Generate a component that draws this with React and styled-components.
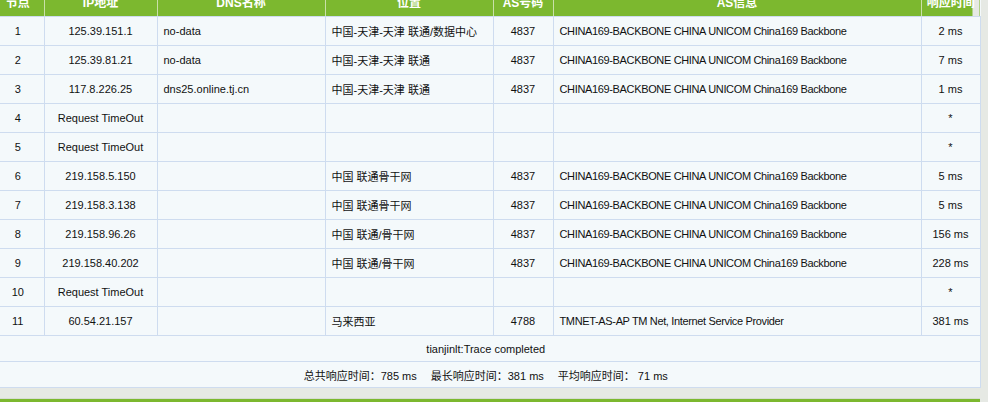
import React from 'react';
import styled, { createGlobalStyle } from 'styled-components';

const GlobalStyle = createGlobalStyle`
  html, body {
    margin: 0;
    padding: 0;
    background: #e6e9e4;
    overflow: hidden;
  }
  body {
    font-family: "Liberation Sans", "Noto Sans CJK SC", sans-serif;
    font-size: 11px;
    color: #111;
  }
`;

const green = '#7cb82f';
const line = '#cedcef';

const Page = styled.div`
  width: 988px;
  margin-left: -8px;
  margin-top: -14px;
  display: flex;
  flex-direction: column;
  & > * { flex-shrink: 0; }
`;

const Table = styled.table`
  width: 988px;
  table-layout: fixed;
  border-collapse: collapse;
  background: #f4f9fb;
`;

const Th = styled.th`
  height: 30px;
  padding: 0;
  background: ${green};
  color: #fff;
  font-weight: bold;
  font-size: 12px;
  text-align: center;
  border-left: 1px solid #c9e0a8;
  border-bottom: 1px solid ${line};
  &:first-child { border-left: none; }
  &:last-child {
    background: linear-gradient(to right, ${green} calc(100% - 7px), #e6e9e4 calc(100% - 7px));
  }
`;

const Td = styled.td`
  height: 28px;
  padding: 0 ${p => (p.$left ? '6px' : '0')};
  text-align: ${p => (p.$left ? 'left' : 'center')};
  letter-spacing: ${p => (p.$tight ? '-0.35px' : 'normal')};
  border: 1px solid ${line};
  white-space: nowrap;
  overflow: hidden;
  &:first-child { border-left: none; }
`;

const FootTd = styled.td`
  height: 25px;
  padding: 0;
  text-align: center;
  border: 1px solid ${line};
  border-left: none;
`;

const Stat = styled.span`
  margin: 0 7px;
`;

const Gap = styled.div`
  height: 10px;
`;

const Bar = styled.div`
  height: 4px;
  width: 988px;
  background: ${green};
  border-top: 1px solid #d7dcd3;
`;

const widths = [52, 113, 168, 168, 60, 368, 59];
const heads = ['节点', 'IP地址', 'DNS名称', '位置', 'AS号码', 'AS信息', '响应时间'];
const cn = 'CHINA169-BACKBONE CHINA UNICOM China169 Backbone';

const rows = [
  ['1', '125.39.151.1', 'no-data', '中国-天津-天津 联通/数据中心', '4837', cn, '2 ms'],
  ['2', '125.39.81.21', 'no-data', '中国-天津-天津 联通', '4837', cn, '7 ms'],
  ['3', '117.8.226.25', 'dns25.online.tj.cn', '中国-天津-天津 联通', '4837', cn, '1 ms'],
  ['4', 'Request TimeOut', '', '', '', '', '*'],
  ['5', 'Request TimeOut', '', '', '', '', '*'],
  ['6', '219.158.5.150', '', '中国 联通骨干网', '4837', cn, '5 ms'],
  ['7', '219.158.3.138', '', '中国 联通骨干网', '4837', cn, '5 ms'],
  ['8', '219.158.96.26', '', '中国 联通/骨干网', '4837', cn, '156 ms'],
  ['9', '219.158.40.202', '', '中国 联通/骨干网', '4837', cn, '228 ms'],
  ['10', 'Request TimeOut', '', '', '', '', '*'],
  ['11', '60.54.21.157', '', '马来西亚', '4788', 'TMNET-AS-AP TM Net, Internet Service Provider', '381 ms'],
];

const leftCols = [2, 3, 5];

function App() {
  return (
    <Page>
      <GlobalStyle />
      <Table>
        <colgroup>
          {widths.map((w, i) => <col key={i} style={{ width: w }} />)}
        </colgroup>
        <thead>
          <tr>{heads.map(h => <Th key={h}>{h}</Th>)}</tr>
        </thead>
        <tbody>
          {rows.map(r => (
            <tr key={r[0]}>
              {r.map((c, i) => (
                <Td key={i} $left={leftCols.includes(i)} $tight={i === 5}>{c}</Td>
              ))}
            </tr>
          ))}
          <tr>
            <FootTd colSpan={7}>tianjinlt:Trace completed</FootTd>
          </tr>
          <tr>
            <FootTd colSpan={7}>
              <Stat>总共响应时间：785 ms</Stat>
              <Stat>最长响应时间：381 ms</Stat>
              <Stat>平均响应时间： 71 ms</Stat>
            </FootTd>
          </tr>
        </tbody>
      </Table>
      <Gap />
      <Bar />
    </Page>
  );
}

export default App;
